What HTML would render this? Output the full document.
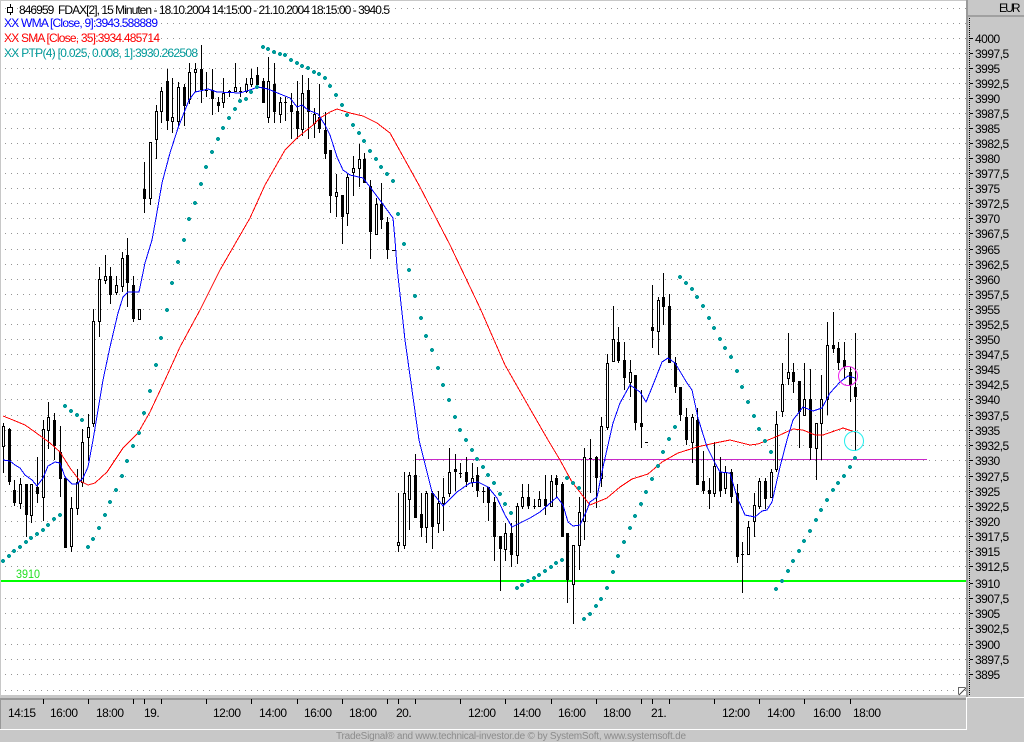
<!DOCTYPE html>
<html><head><meta charset="utf-8"><title>FDAX Chart</title>
<style>
html,body{margin:0;padding:0;background:#c8c8c8;width:1024px;height:742px;overflow:hidden}
svg{display:block}
text{font-family:"Liberation Sans",sans-serif;font-size:12px;white-space:pre}
.a text{letter-spacing:-.5px}
.c{shape-rendering:crispEdges;fill:none}
</style></head><body>
<svg width="1024" height="742" viewBox="0 0 1024 742" xmlns="http://www.w3.org/2000/svg">
<rect width="1024" height="742" fill="#c8c8c8"/>
<rect x="1" y="1" width="965" height="694" fill="#fff"/>
<!-- grid -->
<path class="c" stroke="#949494" stroke-dasharray="1 5" d="M5 8.5H966M5 23.5H966M5 38.5H966M5 53.5H966M5 68.5H966M5 83.5H966M5 98.5H966M5 113.5H966M5 128.5H966M5 143.5H966M5 158.5H966M5 173.5H966M5 188.5H966M5 203.5H966M5 218.5H966M5 233.5H966M5 249.5H966M5 264.5H966M5 279.5H966M5 294.5H966M5 309.5H966M5 324.5H966M5 339.5H966M5 354.5H966M5 369.5H966M5 384.5H966M5 399.5H966M5 415.5H966M5 430.5H966M5 445.5H966M5 460.5H966M5 476.5H966M5 491.5H966M5 506.5H966M5 521.5H966M5 536.5H966M5 551.5H966M5 566.5H966M5 598.5H966M5 613.5H966M5 628.5H966M5 644.5H966M5 659.5H966M5 674.5H966M5 690.5H966"/>
<!-- horizontal lines -->
<path class="c" stroke="#c828c8" d="M415 459.5H927"/>
<rect x="1" y="580" width="965" height="2" fill="#00ff00"/>
<text x="16" y="578" fill="#22e022" textLength="24" lengthAdjust="spacingAndGlyphs">3910</text>
<!-- wicks -->
<path class="c" stroke="#000" d="M3.5 423V473M9.5 428V485M14.5 480V506M20.5 478V509M26.5 484V537M31.5 484V523M37.5 457V503M43.5 420V521M48.5 402V449M54.5 413V460M60.5 426V497M65.5 478V548M71.5 497V552M77.5 469V515M82.5 429V487M88.5 414V461M93.5 309V427M99.5 267V337M105.5 255V284M110.5 267V304M116.5 276V295M122.5 252V292M127.5 238V307M133.5 276V322M144.5 162V213M150.5 142V205M156.5 105V159M161.5 87V123M167.5 69V130M172.5 78V133M178.5 82V126M184.5 84V126M189.5 63V104M195.5 63V92M201.5 45V103M206.5 72V97M212.5 69V115M218.5 97V112M223.5 78V108M229.5 90V97M235.5 63V91M240.5 87V97M246.5 78V93M251.5 69V87M257.5 67V87M263.5 78V103M268.5 57V123M274.5 63V123M280.5 97V123M285.5 97V121M291.5 93V139M297.5 81V139M302.5 75V136M308.5 78V139M314.5 108V138M319.5 84V133M325.5 112V159M330.5 150V213M336.5 174V217M342.5 195V244M347.5 174V226M353.5 156V196M359.5 144V187M364.5 153V183M370.5 180V259M376.5 198V235M381.5 183V229M387.5 217V259M398.5 493V552M404.5 472V549M409.5 472V530M415.5 454V518M421.5 493V537M426.5 491V543M432.5 491V549M438.5 491V533M443.5 478V531M449.5 448V497M455.5 454V491M460.5 463V478M466.5 457V487M472.5 463V487M477.5 467V497M483.5 487V503M488.5 487V521M494.5 497V561M500.5 536V591M505.5 523V561M511.5 523V567M517.5 503V564M522.5 484V509M528.5 484V509M534.5 499V509M539.5 491V506M545.5 475V515M551.5 475V506M556.5 475V497M562.5 482V537M567.5 533V603M573.5 545V624M579.5 497V570M584.5 448V540M590.5 439V493M596.5 456V508M601.5 417V487M607.5 354V430M613.5 306V360M618.5 327V363M624.5 342V390M630.5 360V397M635.5 375V430M641.5 390V448M652.5 285V348M658.5 297V355M663.5 273V325M669.5 294V363M675.5 357V393M680.5 387V421M686.5 408V445M692.5 414V463M697.5 408V485M703.5 451V494M709.5 478V509M714.5 442V497M720.5 457V497M725.5 466V494M731.5 469V503M737.5 484V563M742.5 542V593M748.5 521V554M754.5 493V537M759.5 478V509M765.5 478V509M771.5 469V497M776.5 411V472M782.5 363V417M788.5 333V385M793.5 363V393M799.5 381V448M804.5 363V415M810.5 369V460M816.5 423V480M821.5 375V460M827.5 322V415M833.5 312V353M838.5 342V370M844.5 342V378M850.5 367V402M855.5 333V451M205 90.5h3M228 91.5h3M239 91.5h3M284 102.5h3M392 250.5h4M459 473.5h3M482 491.5h3M533 506.5h3M589 458.5h3M645 442.5h3M741 554.5h3"/>
<!-- black bodies -->
<path class="c" stroke="#000" stroke-width="3" d="M9.5 429V482M14.5 490V503M26.5 484V515M37.5 487V494M54.5 420V446M60.5 452V479M65.5 478V548M110.5 276V295M127.5 255V283M133.5 285V319M144.5 189V199M167.5 81V121M184.5 87V106M201.5 69V90M212.5 90V99M218.5 102V106M257.5 75V85M263.5 81V103M274.5 84V112M291.5 105V112M297.5 111V129M308.5 90V112M319.5 117V129M325.5 130V154M330.5 150V196M342.5 195V217M364.5 159V183M370.5 186V232M381.5 204V220M387.5 222V250M415.5 475V518M421.5 514V528M432.5 493V527M455.5 469V472M466.5 472V482M477.5 475V491M488.5 487V503M494.5 502V537M500.5 536V549M511.5 533V555M528.5 497V506M545.5 499V506M556.5 478V485M562.5 484V537M567.5 533V580M596.5 457V478M618.5 342V361M624.5 360V378M635.5 375V423M641.5 423V427M652.5 327V331M663.5 297V307M669.5 306V363M675.5 363V387M680.5 387V415M686.5 417V440M697.5 420V485M703.5 481V491M709.5 490V494M720.5 472V491M731.5 472V497M737.5 493V557M765.5 481V499M793.5 372V382M799.5 381V412M810.5 399V448M833.5 345V349M838.5 348V363M844.5 360V367M850.5 372V385M855.5 387V397"/>
<!-- white bodies -->
<path class="c" stroke="#000" style="fill:#fff" d="M2.5 426.5h2V446.5h-2zM19.5 484.5h2V503.5h-2zM30.5 484.5h2V515.5h-2zM42.5 429.5h2V497.5h-2zM47.5 417.5h2V430.5h-2zM70.5 508.5h2V546.5h-2zM76.5 482.5h2V508.5h-2zM81.5 442.5h2V482.5h-2zM87.5 427.5h2V437.5h-2zM92.5 321.5h2V423.5h-2zM98.5 279.5h2V321.5h-2zM104.5 276.5h2V280.5h-2zM115.5 285.5h2V292.5h-2zM121.5 258.5h2V286.5h-2zM138.5 309.5h2V319.5h-2zM149.5 142.5h2V198.5h-2zM155.5 111.5h2V139.5h-2zM160.5 91.5h2V111.5h-2zM171.5 117.5h2V121.5h-2zM177.5 87.5h2V121.5h-2zM188.5 72.5h2V99.5h-2zM194.5 69.5h2V72.5h-2zM222.5 93.5h2V102.5h-2zM234.5 87.5h2V91.5h-2zM245.5 84.5h2V91.5h-2zM250.5 78.5h2V84.5h-2zM267.5 81.5h2V117.5h-2zM279.5 102.5h2V114.5h-2zM301.5 93.5h2V129.5h-2zM313.5 114.5h2V123.5h-2zM335.5 192.5h2V196.5h-2zM346.5 177.5h2V213.5h-2zM352.5 168.5h2V172.5h-2zM358.5 159.5h2V168.5h-2zM375.5 204.5h2V234.5h-2zM397.5 542.5h2V545.5h-2zM403.5 493.5h2V545.5h-2zM408.5 475.5h2V499.5h-2zM425.5 493.5h2V527.5h-2zM437.5 503.5h2V523.5h-2zM442.5 497.5h2V503.5h-2zM448.5 472.5h2V493.5h-2zM471.5 478.5h2V482.5h-2zM504.5 533.5h2V549.5h-2zM516.5 506.5h2V555.5h-2zM521.5 497.5h2V506.5h-2zM538.5 499.5h2V506.5h-2zM550.5 481.5h2V506.5h-2zM572.5 545.5h2V584.5h-2zM578.5 512.5h2V545.5h-2zM583.5 457.5h2V521.5h-2zM600.5 426.5h2V478.5h-2zM606.5 363.5h2V427.5h-2zM612.5 339.5h2V361.5h-2zM629.5 372.5h2V382.5h-2zM657.5 300.5h2V331.5h-2zM691.5 417.5h2V442.5h-2zM713.5 466.5h2V493.5h-2zM724.5 472.5h2V488.5h-2zM747.5 527.5h2V554.5h-2zM753.5 505.5h2V521.5h-2zM758.5 481.5h2V506.5h-2zM770.5 472.5h2V497.5h-2zM775.5 424.5h2V469.5h-2zM781.5 384.5h2V411.5h-2zM787.5 372.5h2V378.5h-2zM803.5 399.5h2V415.5h-2zM815.5 423.5h2V448.5h-2zM820.5 399.5h2V423.5h-2zM826.5 345.5h2V399.5h-2z"/>
<!-- SMA -->
<polyline class="c" stroke="#ff0000" points="3,416 13,420 25,425 35,432 50,443 60,452 70,468 80,481 88,485 95,483 107,472 123,448 130,441 138,433 150,412 165,380 180,347 200,310 220,270 250,218 265,185 285,150 297,138 313,125 320,118 330,112 337,109 350,113 363,116 377,123 390,133 395,142 420,187 450,245 480,308 505,365 525,400 548,440 560,460 572,482 590,505 607,498 620,487 632,479 648,474 662,462 678,453 697,447 715,443 730,440 750,445 758,444 773,438 780,435 793,429 803,430 815,435 823,435 843,428 855,432"/>
<!-- WMA -->
<polyline class="c" stroke="#0000ff" points="3,460 10,461 15,465 20,468 25,475 32,480 37,486 43,478 48,466 55,462 60,463 65,477 72,484 77,484 83,478 88,467 93,440 103,380 110,347 118,313 123,297 128,292 139,292 145,263 152,240 156,218 162,183 170,153 178,128 189,100 195,92 200,91 208,89 217,92 240,93 250,90 258,87 268,89 280,94 290,98 297,107 302,105 308,110 318,114 325,125 330,135 337,157 343,170 350,175 363,178 370,187 382,203 393,218 395,240 397,267 405,340 419,440 432,492 443,506 457,492 470,483 478,482 488,487 497,498 505,515 512,527 522,522 530,518 540,512 548,505 557,497 563,505 568,522 573,526 580,525 587,510 590,502 597,497 603,467 613,423 620,403 630,385 640,392 646,402 653,385 662,362 668,358 675,363 687,383 692,390 698,418 707,447 715,463 720,472 730,473 737,497 745,515 755,517 762,511 767,510 772,502 780,467 787,440 793,420 803,407 813,411 822,408 830,393 840,382 848,376 855,378"/>
<!-- PTP dots -->
<path style="shape-rendering:crispEdges" fill="none" stroke="#009a9a" stroke-width="4" stroke-linecap="round" d="M3 561h0M9 556h0M14 551h0M20 547h0M26 542h0M31 538h0M37 534h0M43 530h0M48 525h0M54 519h0M60 515h0M65 406h0M71 411h0M77 415h0M82 420h0M88 547h0M93 539h0M99 528h0M105 515h0M110 502h0M116 490h0M122 476h0M127 461h0M133 446h0M139 433h0M144 413h0M150 391h0M156 365h0M161 338h0M167 310h0M172 283h0M178 262h0M184 240h0M189 219h0M195 203h0M201 184h0M206 167h0M212 152h0M218 139h0M223 128h0M229 118h0M235 109h0M240 101h0M246 99h0M251 92h0M257 87h0M263 47h0M268 49h0M274 52h0M280 54h0M285 55h0M291 60h0M297 63h0M302 66h0M308 68h0M314 72h0M319 74h0M325 78h0M330 86h0M336 95h0M342 105h0M347 115h0M353 125h0M359 133h0M364 141h0M370 151h0M376 159h0M381 167h0M387 174h0M393 181h0M398 214h0M404 244h0M409 270h0M415 296h0M421 318h0M426 336h0M432 350h0M438 368h0M443 385h0M449 400h0M455 417h0M460 430h0M466 440h0M472 450h0M477 459h0M483 467h0M488 475h0M494 483h0M500 494h0M505 504h0M511 513h0M517 588h0M522 585h0M528 581h0M534 578h0M539 575h0M545 571h0M551 567h0M556 563h0M562 560h0M567 478h0M573 483h0M579 488h0M584 619h0M590 614h0M596 606h0M601 599h0M607 588h0M613 572h0M618 556h0M624 542h0M630 528h0M635 516h0M641 504h0M646 492h0M652 479h0M658 466h0M663 452h0M669 439h0M675 427h0M680 277h0M686 283h0M692 289h0M697 297h0M703 306h0M709 318h0M714 328h0M720 339h0M725 348h0M731 357h0M737 371h0M742 387h0M748 402h0M754 416h0M759 429h0M765 441h0M771 452h0M776 589h0M782 581h0M788 571h0M793 561h0M799 551h0M804 541h0M810 531h0M816 520h0M821 510h0M827 500h0M833 490h0M838 483h0M844 476h0M850 467h0M855 458h0"/>
<!-- circles -->
<circle cx="848" cy="376" r="9.5" fill="none" stroke="#ee22ee"/>
<circle cx="854" cy="441" r="9.5" fill="none" stroke="#22eeee"/>
<!-- legend -->
<path class="c" stroke="#000" d="M10.5 4V15"/>
<rect x="7.5" y="7.5" width="5" height="5" stroke="#000" class="c" style="fill:#fff"/>
<text x="19" y="14" fill="#000" textLength="371" lengthAdjust="spacing" xml:space="preserve">846959&#160;&#160;FDAX[2], 15 Minuten - 18.10.2004 14:15:00 - 21.10.2004 18:15:00 - 3940.5</text>
<text x="4" y="27" fill="#0000ff" textLength="154" lengthAdjust="spacing">XX WMA [Close, 9]:3943.588889</text>
<text x="4" y="42" fill="#ff0000" textLength="156" lengthAdjust="spacing">XX SMA [Close, 35]:3934.485714</text>
<text x="4" y="57" fill="#009a9a" textLength="194" lengthAdjust="spacing">XX PTP(4) [0.025, 0.008, 1]:3930.262508</text>
<!-- resize handle -->
<path class="c" style="fill:#fff" stroke="#666" d="M958.5 694.5V687.5H965.5"/>
<path fill="none" stroke="#444" d="M959 695L966 688"/>
<!-- right panel -->
<rect x="966" y="1" width="58" height="696" fill="#c8c8c8"/>
<rect x="966" y="0" width="2" height="697" fill="#9a9a9a"/>
<rect x="968" y="15" width="56" height="2" fill="#a0a0a0"/>
<g class="a" fill="#000">
<text x="999" y="12" textLength="21" lengthAdjust="spacing">EUR</text>
</g>
<path class="c" stroke="#000" stroke-dasharray="1 1" d="M969.5 18V696"/>
<path class="c" stroke="#000" d="M970 38.5h3M970 53.5h3M970 68.5h3M970 83.5h3M970 98.5h3M970 113.5h3M970 128.5h3M970 143.5h3M970 158.5h3M970 173.5h3M970 188.5h3M970 203.5h3M970 218.5h3M970 233.5h3M970 249.5h3M970 264.5h3M970 279.5h3M970 294.5h3M970 309.5h3M970 324.5h3M970 339.5h3M970 354.5h3M970 369.5h3M970 384.5h3M970 399.5h3M970 415.5h3M970 430.5h3M970 445.5h3M970 460.5h3M970 476.5h3M970 491.5h3M970 506.5h3M970 521.5h3M970 536.5h3M970 551.5h3M970 566.5h3M970 583.5h3M970 598.5h3M970 613.5h3M970 628.5h3M970 644.5h3M970 659.5h3M970 674.5h3"/>
<g class="a" fill="#000">
<text x="975" y="43">4000</text><text x="975" y="58">3997,5</text><text x="975" y="73">3995</text><text x="975" y="88">3992,5</text><text x="975" y="103">3990</text><text x="975" y="118">3987,5</text><text x="975" y="133">3985</text><text x="975" y="148">3982,5</text><text x="975" y="163">3980</text><text x="975" y="178">3977,5</text><text x="975" y="193">3975</text><text x="975" y="208">3972,5</text><text x="975" y="223">3970</text><text x="975" y="238">3967,5</text><text x="975" y="254">3965</text><text x="975" y="269">3962,5</text><text x="975" y="284">3960</text><text x="975" y="299">3957,5</text><text x="975" y="314">3955</text><text x="975" y="329">3952,5</text><text x="975" y="344">3950</text><text x="975" y="359">3947,5</text><text x="975" y="374">3945</text><text x="975" y="389">3942,5</text><text x="975" y="404">3940</text><text x="975" y="420">3937,5</text><text x="975" y="435">3935</text><text x="975" y="450">3932,5</text><text x="975" y="465">3930</text><text x="975" y="481">3927,5</text><text x="975" y="496">3925</text><text x="975" y="511">3922,5</text><text x="975" y="526">3920</text><text x="975" y="541">3917,5</text><text x="975" y="556">3915</text><text x="975" y="571">3912,5</text><text x="975" y="588">3910</text><text x="975" y="603">3907,5</text><text x="975" y="618">3905</text><text x="975" y="633">3902,5</text><text x="975" y="649">3900</text><text x="975" y="664">3897,5</text><text x="975" y="679">3895</text>
</g>
<!-- bottom axis -->
<rect x="0" y="698" width="966" height="2" fill="#989898"/>
<rect x="0" y="698" width="1" height="31" fill="#989898"/>
<rect x="0" y="729" width="967" height="1" fill="#fff"/>
<rect x="966" y="697" width="1" height="33" fill="#fff"/>
<rect x="966" y="697" width="58" height="1" fill="#fff"/>
<path class="c" stroke="#000" d="M43.5 699V704M88.5 699V704M133.5 699V704M144.5 699V704M161.5 699V704M206.5 699V704M251.5 699V704M297.5 699V704M342.5 699V704M387.5 699V704M398.5 699V704M415.5 699V704M460.5 699V704M505.5 699V704M551.5 699V704M596.5 699V704M641.5 699V704M652.5 699V704M669.5 699V704M714.5 699V704M759.5 699V704M804.5 699V704M850.5 699V704"/>
<g class="a" fill="#000">
<text x="8" y="717">14:15</text><text x="50" y="717">16:00</text><text x="96" y="717">18:00</text><text x="144" y="717">19.</text><text x="213" y="717">12:00</text><text x="259" y="717">14:00</text><text x="304" y="717">16:00</text><text x="349" y="717">18:00</text><text x="396" y="717">20.</text><text x="468" y="717">12:00</text><text x="513" y="717">14:00</text><text x="558" y="717">16:00</text><text x="603" y="717">18:00</text><text x="651" y="717">21.</text><text x="722" y="717">12:00</text><text x="767" y="717">14:00</text><text x="813" y="717">16:00</text><text x="853" y="717">18:00</text>
</g>
<text x="336" y="739" fill="#8c8c8c" style="font-size:10px" textLength="350" lengthAdjust="spacing">TradeSignal® and www.technical-investor.de © by SystemSoft, www.systemsoft.de</text>
</svg>
</body></html>
